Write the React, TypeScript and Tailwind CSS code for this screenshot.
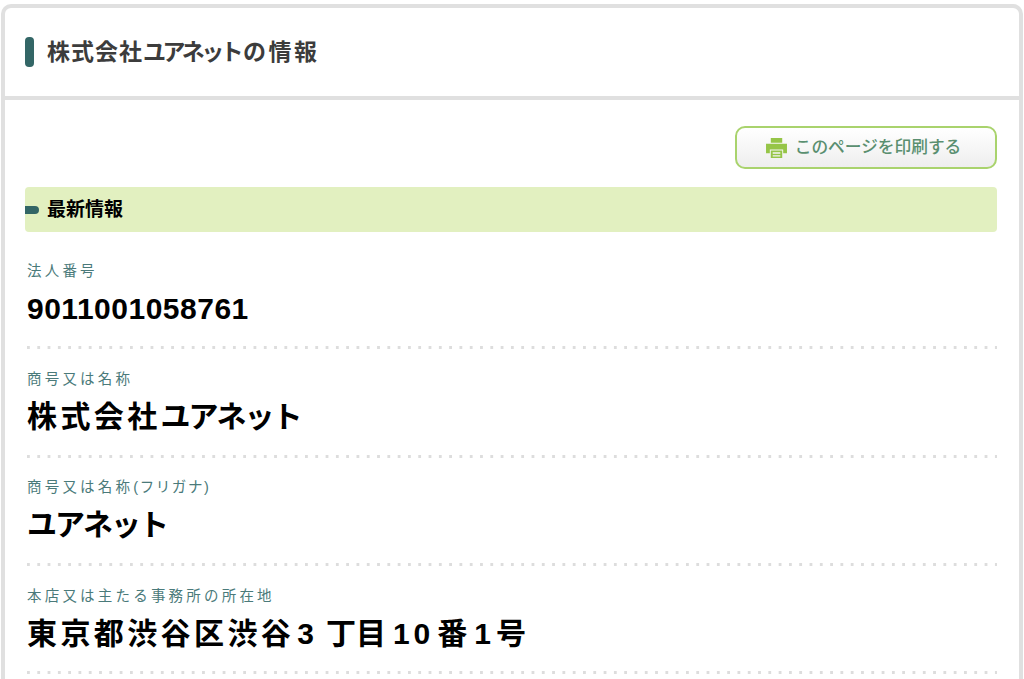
const FONT = "font-['Liberation_Sans','Noto_Sans_CJK_JP',sans-serif]";

const KANJI = "tracking-[3.4px]";
const KANA = "tracking-[-2px]";

const items = [
  { label: "法人番号", parts: [{ text: "9011001058761", cls: "tracking-[0.5px]" }] },
  {
    label: "商号又は名称",
    parts: [
      { text: "株式会社", cls: KANJI },
      { text: "ユアネット", cls: KANA },
    ],
  },
  {
    label: "商号又は名称",
    sub: "(フリガナ)",
    parts: [{ text: "ユアネット", cls: KANA }],
  },
  {
    label: "本店又は主たる事務所の所在地",
    parts: [
      { text: "東京都渋谷区渋谷", cls: KANJI },
      { text: "3", cls: "ml-[3px] tracking-[12px]" },
      { text: "丁", cls: "tracking-[0px]" },
      { text: "目", cls: "tracking-[7px]" },
      { text: "1", cls: "tracking-[4px]" },
      { text: "0", cls: "tracking-[7px]" },
      { text: "番", cls: "tracking-[7px]" },
      { text: "1", cls: "tracking-[5px]" },
      { text: "号", cls: "tracking-[0px]" },
    ],
  },
];

function PrintIcon() {
  return (
    <svg viewBox="0 0 24 21" className="h-[20px] w-[23px]" fill="#96c548">
      <path d="M6 0h12v5H6z" />
      <path d="M1 6h22v10h-4v-4H5v4H1z" />
      <path d="M6 13h12v8H6z M8 15v1.5h8V15z M8 18v1.5h8V18z" fillRule="evenodd" />
    </svg>
  );
}

type Part = { text: string; cls: string };

function Row({ label, sub, parts }: { label: string; sub?: string; parts: Part[] }) {
  return (
    <div className="h-[108.3px] pt-[18.6px] pl-[2px]">
      <div className="h-[22px] text-[14.5px] leading-[22px] tracking-[3.2px] text-[#4a7a7a]">
        {label}
        {sub && <span className="tracking-[1.6px]">{sub}</span>}
      </div>
      <div className="mt-[4px] h-[46px] text-[30px] leading-[46px] font-bold text-black">
        {parts.map((p, i) => (
          <span key={i} className={p.cls}>
            {p.text}
          </span>
        ))}
      </div>
      <div className="mt-[14.7px] h-[3px] bg-[linear-gradient(to_right,#dddddd_3px,transparent_3px)] bg-[length:10.3px_3px]" />
    </div>
  );
}

export default function App() {
  return (
    <div className={`${FONT} h-[679px] overflow-hidden bg-white pt-[4px] pr-px pl-[1px]`}>
      <div className="h-[700px] rounded-t-[10px] border-x-4 border-t-4 border-[#e0e0e0]">
        <div className="flex h-[92px] items-center border-b-4 border-[#e0e0e0] pl-[20px]">
          <span className="h-[30px] w-[9px] rounded-[4px] bg-[#336666]" />
          <h1 className="ml-[13px] text-[23px] font-semibold text-[#3c3c3c]">
            <span className="tracking-[1px]">株式会社</span>
            <span className="tracking-[-3.6px]">ユアネット</span>
            <span className="ml-[3px] tracking-[2.5px]">の情報</span>
          </h1>
        </div>
        <div className="pr-[22px] pl-[20px]">
          <div className="flex justify-end pt-[26px]">
            <button
              type="button"
              className="flex h-[43px] w-[262px] items-center justify-center gap-[7px] rounded-[10px] border-2 border-[#a9d36d] bg-gradient-to-b from-white to-[#eeeeee] pr-[6px] text-[16.7px] font-medium text-[#5a8f70]"
            >
              <PrintIcon />
              このページを印刷する
            </button>
          </div>
          <div className="mt-[18px] flex h-[45px] items-center rounded-[4px] bg-[#e2f0c0]">
            <span className="h-[8px] w-[14px] rounded-r-[4px] bg-[#336666]" />
            <h2 className="ml-[8px] pt-[1px] text-[19px] font-bold text-black">最新情報</h2>
          </div>
          <div className="pt-[9.2px]">
            {items.map((it) => (
              <Row key={it.label + (it.sub ?? "")} label={it.label} sub={it.sub} parts={it.parts} />
            ))}
          </div>
        </div>
      </div>
    </div>
  );
}
